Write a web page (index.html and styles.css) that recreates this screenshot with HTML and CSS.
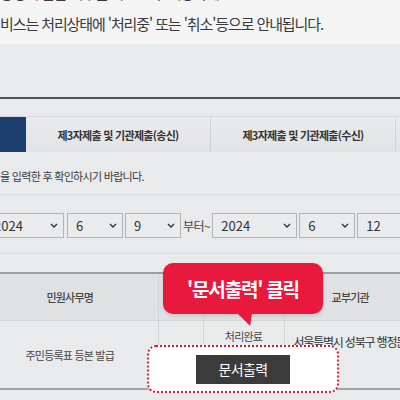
FILE: index.html
```html
<!DOCTYPE html>
<html lang="ko">
<head>
<meta charset="utf-8">
<title>민원신청내역</title>
<link rel="stylesheet" href="styles.css">
</head>
<body>
<div class="page">
  <section class="notice">
    <p class="notice-line notice-line--cut">증명서 발급 여부를 확인한 후 이용하세요.</p>
    <p class="notice-line notice-line--main">비스는 처리상태에 '처리중' 또는 '취소'등으로 안내됩니다.</p>
  </section>
  <div class="band"></div>
  <nav class="tabs">
    <span class="tab tab--active"></span>
    <span class="tab">제3자제출 및 기관제출(송신)</span>
    <span class="tab">제3자제출 및 기관제출(수신)</span>
    <span class="tab"></span>
  </nav>
  <p class="guide">을 입력한 후 확인하시기 바랍니다.</p>
  <div class="filter">
    <div class="select select--first">2024<svg class="chev" viewBox="0 0 8 5"><path d="M1 1l3 3 3-3"/></svg></div>
    <div class="select select--sm select--gap">6<svg class="chev" viewBox="0 0 8 5"><path d="M1 1l3 3 3-3"/></svg></div>
    <div class="select select--sm">9<svg class="chev" viewBox="0 0 8 5"><path d="M1 1l3 3 3-3"/></svg></div>
    <span class="range">부터~</span>
    <div class="select select--year">2024<svg class="chev" viewBox="0 0 8 5"><path d="M1 1l3 3 3-3"/></svg></div>
    <div class="select select--sm">6<svg class="chev" viewBox="0 0 8 5"><path d="M1 1l3 3 3-3"/></svg></div>
    <div class="select select--year">12<svg class="chev" viewBox="0 0 8 5"><path d="M1 1l3 3 3-3"/></svg></div>
  </div>
  <table class="list">
    <colgroup>
      <col class="c1"><col class="c2"><col class="c3"><col class="c4">
    </colgroup>
    <thead>
      <tr><th>민원사무명</th><th></th><th></th><th>교부기관</th></tr>
    </thead>
    <tbody>
      <tr>
        <td>주민등록표 등본 발급</td>
        <td></td>
        <td class="status">처리완료</td>
        <td class="org">서울특별시 성북구 행정문화과</td>
      </tr>
    </tbody>
  </table>
</div>
<div class="focus-box"><span class="print-btn">문서출력</span></div>
<div class="callout">'문서출력' 클릭</div>
</body>
</html>
```
FILE: styles.css
```css
html, body {
  margin: 0;
  padding: 0;
  overflow: hidden;
}
body {
  width: 400px;
  height: 400px;
  background: #e9eaeb;
  font-family: "Noto Sans CJK KR", "Noto Sans", sans-serif;
  color: #3a3a3a;
  position: relative;
}
.page {
  width: 400px;
}
.notice {
  background: #f4f4f4;
  height: 44px;
  overflow: hidden;
}
.notice-line {
  margin: 0;
  font-size: 15px;
  line-height: 26px;
  letter-spacing: -1.1px;
  color: #3a3a3a;
  white-space: nowrap;
}
.notice-line--cut {
  margin-top: -20px;
}
.notice-line--main {
  margin-top: 5px;
}
.band {
  height: 53px;
  border-bottom: 2px solid #505152;
}
.tabs {
  margin-top: 17px;
  display: flex;
  height: 36px;
  border-top: 1px solid #d6d7d8;
  box-sizing: border-box;
  white-space: nowrap;
}
.tab {
  flex: none;
  width: 185px;
  display: flex;
  align-items: center;
  justify-content: center;
  background: linear-gradient(#eaebec, #e2e3e4);
  border-right: 1px solid #d2d3d4;
  font-size: 11px;
  font-weight: 700;
  letter-spacing: -0.7px;
  color: #333;
  box-sizing: border-box;
}
.tab--active {
  width: 26px;
  background: #1f3e70;
  border-right: 0;
}
.guide {
  margin: 0;
  padding: 14px 0 8px;
  font-size: 11px;
  line-height: 20px;
  letter-spacing: -0.7px;
  color: #3a3a3a;
  border-bottom: 1px solid #dcdddd;
  white-space: nowrap;
}
.filter {
  display: flex;
  align-items: center;
  gap: 2px;
  padding: 18px 0 15px;
  border-bottom: 1px solid #dcdddd;
  white-space: nowrap;
}
.select {
  flex: none;
  height: 25px;
  box-sizing: border-box;
  border: 1px solid #b3b4b5;
  background: #eaebec;
  display: flex;
  align-items: center;
  justify-content: space-between;
  padding: 0 5px 0 8px;
  font-size: 13px;
  color: #333;
}
.select--first {
  width: 79px;
  margin-left: -15px;
}
.select--gap {
  margin-left: 1px;
}
.select--sm {
  width: 56px;
}
.select--year {
  width: 85px;
}
.chev {
  width: 8px;
  height: 5px;
  fill: none;
  stroke: #333;
  stroke-width: 1.4;
}
.range {
  font-size: 12px;
  letter-spacing: -0.5px;
  color: #444;
}
.list {
  margin-top: 18px;
  margin-left: -18px;
  width: 434px;
  table-layout: fixed;
  border-collapse: collapse;
  border-top: 2px solid #9d9e9f;
  border-bottom: 2px solid #a3a4a5;
}
.c1 { width: 176px; }
.c2 { width: 45px; }
.c3 { width: 81px; }
.c4 { width: 132px; }
.list th {
  height: 46px;
  padding: 0;
  background: #e0e1e2;
  font-size: 11px;
  font-weight: 500;
  letter-spacing: -0.8px;
  color: #444;
  border-bottom: 1px solid #d3d4d5;
  border-left: 1px solid #d3d4d5;
}
.list th:first-child,
.list td:first-child {
  border-left: 0;
}
.list td {
  height: 55px;
  padding: 0;
  text-align: center;
  font-size: 11px;
  letter-spacing: -0.8px;
  color: #444;
  border-left: 1px solid #d3d4d5;
}
.list td.status {
  vertical-align: top;
  padding-top: 7px;
}
.list td.org {
  text-align: left;
  vertical-align: top;
  padding-top: 12px;
  padding-left: 9px;
  font-size: 12px;
  letter-spacing: -1.2px;
  color: #333;
  white-space: nowrap;
  overflow: hidden;
}
.focus-box {
  position: absolute;
  left: 147px;
  top: 345px;
  width: 192px;
  height: 48px;
  box-sizing: border-box;
  border: 2px dotted #e3173a;
  border-radius: 9px;
  background: #ffffff;
  display: flex;
  align-items: center;
  justify-content: center;
}
.print-btn {
  width: 94px;
  height: 29px;
  background: #3b3b3b;
  color: #ffffff;
  font-size: 14px;
  letter-spacing: -0.6px;
  display: flex;
  align-items: center;
  justify-content: center;
}
.callout {
  position: absolute;
  left: 163px;
  top: 263px;
  width: 160px;
  height: 51px;
  border-radius: 10px;
  background: #e8193c;
  color: #ffffff;
  font-size: 19px;
  font-weight: 700;
  letter-spacing: -1.2px;
  display: flex;
  align-items: center;
  justify-content: center;
  box-shadow: 0 2px 4px rgba(0, 0, 0, 0.12);
  white-space: nowrap;
}
.callout::after {
  content: "";
  position: absolute;
  left: 74px;
  top: 50px;
  width: 15px;
  height: 13px;
  background: #e8193c;
  clip-path: polygon(0 0, 100% 0, 88% 100%);
}
```
